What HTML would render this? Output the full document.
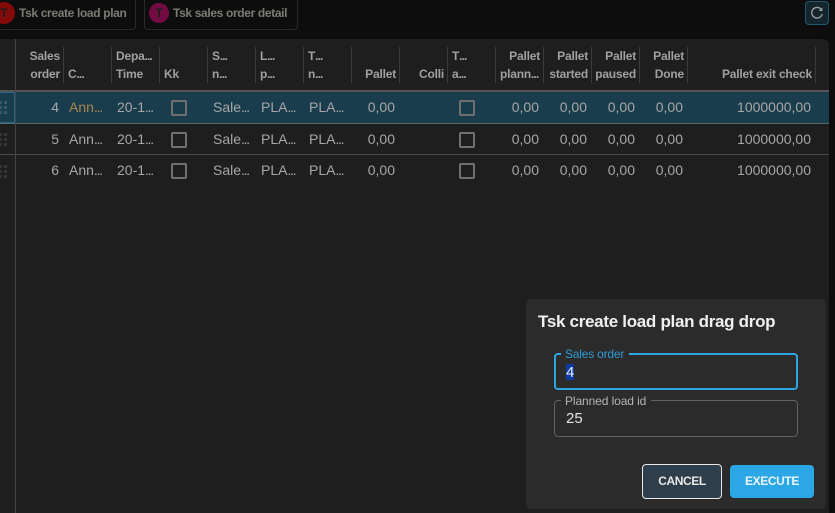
<!DOCTYPE html>
<html><head><meta charset="utf-8">
<style>
html,body{margin:0;padding:0;background:#0d0d0d}
#p{position:relative;width:835px;height:513px;overflow:hidden;background:#0d0d0d;font-family:"Liberation Sans",sans-serif}
#p div{position:absolute;white-space:nowrap}
.tab{border:1px solid #2a2a2a;border-radius:4px;top:-6px;height:34px}
.tt{top:5px;font-size:12px;line-height:16px;font-weight:bold;color:#7c7c74;letter-spacing:-.35px}
.c{border-radius:50%;text-align:center;color:#1c1c1c;font-size:12px;font-weight:bold}
.s{top:47px;width:1px;height:36px;background:#3a3a3a}
.h{font-size:12px;line-height:18px;font-weight:bold;color:#a0a0a0;letter-spacing:-.2px}
.h i{font-style:normal;letter-spacing:-.9px}
.l1{top:47px}.l2{top:65px}
.r{text-align:right}
.t{font-size:14px;line-height:18px;color:#a6a6a6}
.t i{font-style:normal;letter-spacing:-1.3px}
.cb{width:12px;height:12px;border:2px solid #707070;border-radius:2px}
</style></head><body>
<div id="p">
<div class="tab" style="left:-20px;width:154px"></div>
<div class="c" style="left:-7px;top:2px;width:22px;height:22px;line-height:23px;background:#840a0a">T</div>
<div class="tt" style="left:19px">Tsk create load plan</div>
<div class="tab" style="left:144px;width:152px"></div>
<div class="c" style="left:149px;top:3px;width:20px;height:20px;line-height:21px;background:#720b42">T</div>
<div class="tt" style="left:173px">Tsk sales order detail</div>
<div style="left:805px;top:1px;width:22px;height:22px;border:1px solid #1d5a70;border-radius:4px;background:#14252d"></div>
<svg style="position:absolute;left:809px;top:5px" width="16" height="16" viewBox="0 0 16 16" fill="none" stroke="#9c9c9c" stroke-width="1.4"><path d="M12.6 5A5.3 5.3 0 1 0 13.2 9"/><path d="M13.4 2.4V6H9.8Z" fill="#9c9c9c" stroke="none"/></svg>

<div style="left:0;top:39px;width:829px;height:480px;background:#1e1e1e;border-radius:0 7px 0 0"></div>
<div style="left:0;top:90px;width:829px;height:2px;background:#555"></div>
<div style="left:0;top:92px;width:829px;height:31px;background:#1a3d4d"></div>
<div style="left:0;top:123px;width:829px;height:1px;background:#5a6a70"></div>
<div style="left:0;top:154px;width:829px;height:1px;background:#4a4a4a"></div>
<div style="left:0;top:92px;width:15px;height:31px;box-sizing:border-box;border:1px solid #24688a;border-left:0"></div>
<div style="left:15px;top:39px;width:1px;height:474px;background:#444"></div>

<div class="s" style="left:63px"></div><div class="s" style="left:111px"></div><div class="s" style="left:159px"></div><div class="s" style="left:207px"></div><div class="s" style="left:255px"></div><div class="s" style="left:303px"></div><div class="s" style="left:351px"></div><div class="s" style="left:399px"></div><div class="s" style="left:447px"></div><div class="s" style="left:495px"></div><div class="s" style="left:543px"></div><div class="s" style="left:591px"></div><div class="s" style="left:639px"></div><div class="s" style="left:687px"></div><div class="s" style="left:815px"></div>

<div class="h l1 r" style="right:775px">Sales</div><div class="h l2 r" style="right:775px">order</div>
<div class="h l2" style="left:68px">C<i>...</i></div>
<div class="h l1" style="left:116px">Depa<i>...</i></div><div class="h l2" style="left:116px">Time</div>
<div class="h l2" style="left:164px">Kk</div>
<div class="h l1" style="left:212px">S<i>...</i></div><div class="h l2" style="left:212px">n<i>...</i></div>
<div class="h l1" style="left:260px">L<i>...</i></div><div class="h l2" style="left:260px">p<i>...</i></div>
<div class="h l1" style="left:308px">T<i>...</i></div><div class="h l2" style="left:308px">n<i>...</i></div>
<div class="h l2 r" style="right:439px">Pallet</div>
<div class="h l2 r" style="right:391px">Colli</div>
<div class="h l1" style="left:452px">T<i>...</i></div><div class="h l2" style="left:452px">a<i>...</i></div>
<div class="h l1 r" style="right:295px">Pallet</div><div class="h l2" style="left:500px">plann<i>...</i></div>
<div class="h l1 r" style="right:247px">Pallet</div><div class="h l2 r" style="right:247px">started</div>
<div class="h l1 r" style="right:199px">Pallet</div><div class="h l2 r" style="right:199px">paused</div>
<div class="h l1 r" style="right:151px">Pallet</div><div class="h l2 r" style="right:151px">Done</div>
<div class="h l2 r" style="right:23px">Pallet exit check</div>

<!-- row 1 -->
<div class="t r" style="top:98px;right:776px">4</div><div class="t" style="top:98px;left:69px;color:#a8854f">Ann<i>...</i></div><div class="t" style="top:98px;left:117px">20-1<i>...</i></div><div class="cb" style="top:100px;left:171px"></div><div class="t" style="top:98px;left:213px">Sale<i>...</i></div><div class="t" style="top:98px;left:261px">PLA<i>...</i></div><div class="t" style="top:98px;left:309px">PLA<i>...</i></div><div class="t r" style="top:98px;right:440px">0,00</div><div class="cb" style="top:100px;left:459px"></div><div class="t r" style="top:98px;right:296px">0,00</div><div class="t r" style="top:98px;right:248px">0,00</div><div class="t r" style="top:98px;right:200px">0,00</div><div class="t r" style="top:98px;right:152px">0,00</div><div class="t r" style="top:98px;right:24px">1000000,00</div>
<!-- row 2 -->
<div class="t r" style="top:130px;right:776px">5</div><div class="t" style="top:130px;left:69px">Ann<i>...</i></div><div class="t" style="top:130px;left:117px">20-1<i>...</i></div><div class="cb" style="top:132px;left:171px"></div><div class="t" style="top:130px;left:213px">Sale<i>...</i></div><div class="t" style="top:130px;left:261px">PLA<i>...</i></div><div class="t" style="top:130px;left:309px">PLA<i>...</i></div><div class="t r" style="top:130px;right:440px">0,00</div><div class="cb" style="top:132px;left:459px"></div><div class="t r" style="top:130px;right:296px">0,00</div><div class="t r" style="top:130px;right:248px">0,00</div><div class="t r" style="top:130px;right:200px">0,00</div><div class="t r" style="top:130px;right:152px">0,00</div><div class="t r" style="top:130px;right:24px">1000000,00</div>
<!-- row 3 -->
<div class="t r" style="top:161px;right:776px">6</div><div class="t" style="top:161px;left:69px">Ann<i>...</i></div><div class="t" style="top:161px;left:117px">20-1<i>...</i></div><div class="cb" style="top:163px;left:171px"></div><div class="t" style="top:161px;left:213px">Sale<i>...</i></div><div class="t" style="top:161px;left:261px">PLA<i>...</i></div><div class="t" style="top:161px;left:309px">PLA<i>...</i></div><div class="t r" style="top:161px;right:440px">0,00</div><div class="cb" style="top:163px;left:459px"></div><div class="t r" style="top:161px;right:296px">0,00</div><div class="t r" style="top:161px;right:248px">0,00</div><div class="t r" style="top:161px;right:200px">0,00</div><div class="t r" style="top:161px;right:152px">0,00</div><div class="t r" style="top:161px;right:24px">1000000,00</div>

<svg style="position:absolute;left:0;top:0" width="15" height="190">
<g fill="#38596a"><rect x="0" y="101" width="2" height="3"/><rect x="4" y="101" width="3" height="3"/><rect x="0" y="106" width="2" height="3"/><rect x="4" y="106" width="3" height="3"/><rect x="0" y="111" width="2" height="3"/><rect x="4" y="111" width="3" height="3"/></g>
<g fill="#363636"><rect x="0" y="133" width="2" height="3"/><rect x="4" y="133" width="3" height="3"/><rect x="0" y="138" width="2" height="3"/><rect x="4" y="138" width="3" height="3"/><rect x="0" y="143" width="2" height="3"/><rect x="4" y="143" width="3" height="3"/><rect x="0" y="165" width="2" height="3"/><rect x="4" y="165" width="3" height="3"/><rect x="0" y="170" width="2" height="3"/><rect x="4" y="170" width="3" height="3"/><rect x="0" y="175" width="2" height="3"/><rect x="4" y="175" width="3" height="3"/></g>
</svg>

<!-- dialog -->
<div style="left:526px;top:299px;width:300px;height:210px;background:#2b2b2b;border-radius:5px"></div>
<div style="left:538px;top:311px;font-size:17px;line-height:22px;font-weight:bold;color:#f0f0f0;letter-spacing:-.3px">Tsk create load plan drag drop</div>

<div style="left:554px;top:353px;width:240px;height:33px;border:2px solid #2ea5e0;border-radius:4px"></div>
<div style="left:561px;top:348px;height:12px;width:68px;background:#2b2b2b"></div>
<div style="left:565px;top:346px;font-size:12px;line-height:16px;color:#2e9bd3;letter-spacing:-.2px">Sales order</div>
<div style="left:566px;top:364px;width:8px;height:16px;background:#0d3ba6"></div>
<div style="left:566px;top:364px;font-size:15px;line-height:18px;color:#f0f0f0">4</div>

<div style="left:554px;top:400px;width:242px;height:35px;border:1px solid #626262;border-radius:4px"></div>
<div style="left:561px;top:395px;height:12px;width:90px;background:#2b2b2b"></div>
<div style="left:565px;top:393px;font-size:12px;line-height:16px;color:#b4b4b4;letter-spacing:-.1px">Planned load id</div>
<div style="left:566px;top:410px;font-size:15px;line-height:18px;color:#e4e4e4">25</div>

<div style="left:642px;top:464px;width:78px;height:33px;border:1px solid #e8e8e8;border-radius:4px;background:#2e3f4b;color:#e8e8e8;font-size:12px;font-weight:bold;line-height:33px;text-align:center;letter-spacing:-.4px">CANCEL</div>
<div style="left:730px;top:465px;width:84px;height:33px;border-radius:4px;background:#2aa7e4;color:#eaf6fc;font-size:12px;font-weight:bold;line-height:33px;text-align:center;letter-spacing:-.4px">EXECUTE</div>
</div>
</body></html>
